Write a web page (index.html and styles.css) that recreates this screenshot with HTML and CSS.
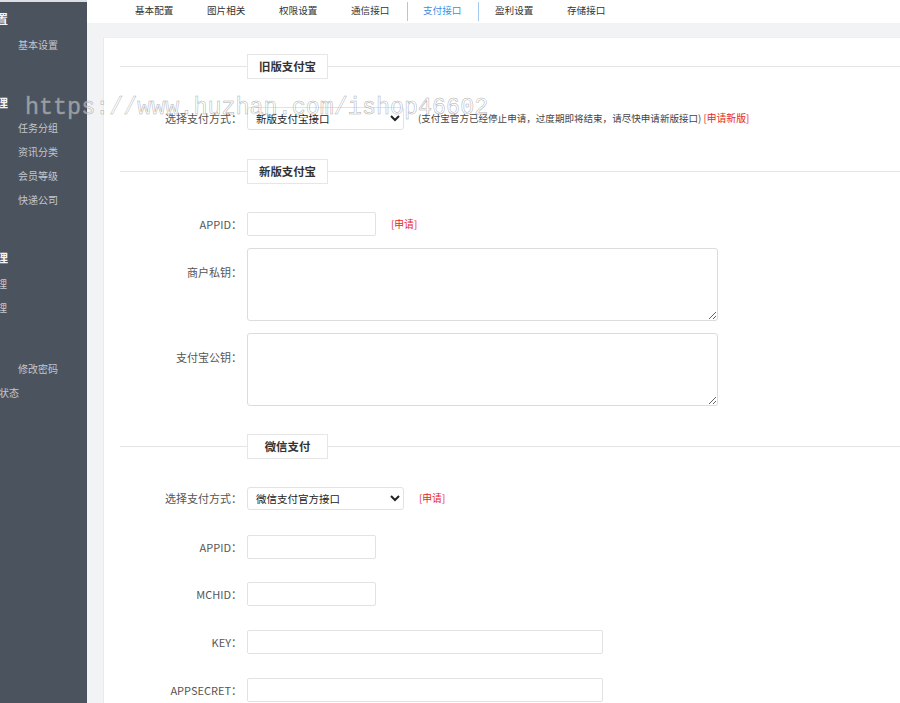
FILE: index.html
```html
<!DOCTYPE html>
<html lang="zh-CN">
<head>
<meta charset="utf-8">
<title>支付接口</title>
<link rel="stylesheet" href="styles.css">
</head>
<body>
<div class="page">
  <aside class="sidebar">
    <div class="nav">
      <div class="group g1">
        <div class="nav-head">系统设置</div>
        <div class="nav-item">基本设置</div>
      </div>
      <div class="group g2">
        <div class="nav-head">分类管理</div>
        <div class="nav-item">任务分组</div>
        <div class="nav-item">资讯分类</div>
        <div class="nav-item">会员等级</div>
        <div class="nav-item">快递公司</div>
      </div>
      <div class="group g3">
        <div class="nav-head">会员管理</div>
        <div class="nav-item cut">会员列表管理</div>
        <div class="nav-item cut">实名认证管理</div>
      </div>
      <div class="group g4">
        <div class="nav-item">修改密码</div>
        <div class="nav-item cut2">查看系统状态</div>
      </div>
    </div>
  </aside>

  <main class="main">
    <nav class="tabs">
      <a class="tab">基本配置</a>
      <a class="tab">图片相关</a>
      <a class="tab">权限设置</a>
      <a class="tab">通信接口</a>
      <a class="tab active">支付接口</a>
      <a class="tab">盈利设置</a>
      <a class="tab">存储接口</a>
    </nav>

    <div class="card">
      <div class="sec-head"><span class="sec-title">旧版支付宝</span></div>
      <div class="row row-sel">
        <label class="lbl lbl-sel">选择支付方式：</label>
        <select class="sel"><option>新版支付宝接口</option><option>旧版支付宝接口</option></select>
        <span class="note">(支付宝官方已经停止申请，过度期即将结束，请尽快申请新版接口) <a class="apply">[申请新版]</a></span>
      </div>

      <div class="sec-head"><span class="sec-title">新版支付宝</span></div>
      <div class="row gap-s">
        <label class="lbl">APPID：</label>
        <input class="inp inp-s" type="text">
        <a class="apply apply-inp">[申请]</a>
      </div>
      <div class="row gap-s">
        <label class="lbl lbl-area">商户私钥：</label>
        <textarea class="area"></textarea>
      </div>
      <div class="row gap-sec">
        <label class="lbl lbl-area">支付宝公钥：</label>
        <textarea class="area"></textarea>
      </div>

      <div class="sec-head"><span class="sec-title">微信支付</span></div>
      <div class="row gap-m">
        <label class="lbl lbl-sel">选择支付方式：</label>
        <select class="sel sel2"><option>微信支付官方接口</option></select>
        <a class="apply apply-sel">[申请]</a>
      </div>
      <div class="row gap-m2">
        <label class="lbl">APPID：</label>
        <input class="inp inp-s" type="text">
      </div>
      <div class="row gap-l">
        <label class="lbl">MCHID：</label>
        <input class="inp inp-s" type="text">
      </div>
      <div class="row gap-l">
        <label class="lbl">KEY：</label>
        <input class="inp inp-l" type="text">
      </div>
      <div class="row gap-l">
        <label class="lbl">APPSECRET：</label>
        <input class="inp inp-l" type="text">
      </div>
    </div>
  </main>

  <div class="watermark">https://www.huzhan.com/ishop46602</div>
</div>
</body>
</html>
```

FILE: styles.css
```css
* { box-sizing: border-box; }

html, body {
  margin: 0;
  padding: 0;
}

body {
  width: 900px;
  height: 703px;
  overflow: hidden;
  font-family: "Noto Sans CJK SC", "Open Sans", sans-serif;
  color: #333;
  background: #f2f3f5;
}

.page {
  position: relative;
  display: flex;
  width: 900px;
  height: 703px;
  overflow: hidden;
}

/* ---------- sidebar ---------- */
.sidebar {
  flex: none;
  width: 87px;
  height: 703px;
  background: #4b535f;
  border-top: 2px solid #dcdfe4;
  overflow: hidden;
}

.nav {
  margin-left: -60px;
  width: 160px;
  white-space: nowrap;
}

.nav-head {
  height: 26px;
  line-height: 26px;
  padding-left: 20px;
  font-size: 12px;
  font-weight: bold;
  color: #f4f5f7;
}

.nav-item {
  height: 24px;
  line-height: 24px;
  padding-left: 78px;
  font-size: 10px;
  color: #c3c7ce;
}

.nav-item.cut { padding-left: 7px; }
.nav-item.cut2 { padding-left: 19px; }

.g1 { padding-top: 4px; }
.g1 .nav-head { margin-bottom: 1px; }
.g2 { margin-top: 33px; }
.g3 { margin-top: 33px; }
.g3 .nav-head { margin-bottom: 1px; }
.g4 { margin-top: 37px; }

/* ---------- main ---------- */
.main {
  flex: 1;
  min-width: 0;
  background: #f2f3f5;
}

.tabs {
  display: flex;
  height: 23px;
  padding: 2px 0 0 32px;
  background: #fff;
}

.tab {
  width: 72px;
  height: 19px;
  line-height: 16px;
  padding: 0 15px;
  font-size: 9.6px;
  color: #333;
  border-left: 1px solid transparent;
  border-right: 1px solid transparent;
  white-space: nowrap;
}

.tab.active {
  color: #3d8ee6;
  border-left-color: #a6c9ee;
  border-right-color: #a6c9ee;
}

.card {
  margin: 14px 0 0 16px;
  height: 700px;
  padding: 16px 0 0 16px;
  background: #fff;
  border-left: 1px solid #e9eaec;
  border-top: 1px solid #eeeff1;
}

/* section header with rule */
.sec-head {
  height: 25px;
  margin-bottom: 28px;
  background: linear-gradient(#e4e4e4, #e4e4e4) no-repeat 0 12px / 100% 1px;
}

.sec-title {
  display: block;
  width: 81px;
  height: 25px;
  margin-left: 127px;
  line-height: 23px;
  text-align: center;
  font-size: 11.4px;
  font-weight: bold;
  color: #333;
  background: #fff;
  border: 1px solid #e6e6e6;
}

/* form rows */
.row {
  display: flex;
  align-items: flex-start;
}

.row-sel { margin: 1px 0 29px; }

.gap-s { margin-bottom: 12px; }
.gap-sec { margin-bottom: 28px; }
.gap-m { margin-bottom: 25px; }
.gap-m2 { margin-bottom: 23px; }
.gap-l { margin-bottom: 24px; }

.lbl {
  flex: none;
  width: 127px;
  padding-right: 5px;
  line-height: 24px;
  text-align: right;
  font-size: 11px;
  color: #555;
  white-space: nowrap;
}

.lbl-sel { line-height: 23px; }
.lbl-area { padding-top: 12px; }

.inp {
  height: 24px;
  border: 1px solid #e2e2e2;
  border-radius: 2px;
  background: #fff;
  outline: none;
}

.inp-s { width: 129px; }
.inp-l { width: 356px; }

.area {
  width: 471px;
  height: 73px;
  border: 1px solid #dcdcdc;
  border-radius: 3px;
  background: #fff;
  outline: none;
  resize: both;
}

.sel {
  width: 157px;
  height: 23px;
  padding: 0 4px;
  font-family: "Noto Sans CJK SC", sans-serif;
  font-size: 10.5px;
  color: #222;
  border: 1px solid #e2e2e2;
  border-radius: 3px;
  background: #fff;
}

.note {
  margin-left: 14px;
  line-height: 23px;
  font-size: 9.55px;
  color: #444;
  white-space: nowrap;
}

.apply {
  color: #e8261c;
  font-size: 9.8px;
  white-space: nowrap;
}

.apply-inp {
  margin-left: 15px;
  line-height: 24px;
}

.apply-sel {
  margin-left: 15px;
  line-height: 23px;
}

/* watermark lying over the page */
.watermark {
  position: absolute;
  left: 25px;
  top: 97px;
  font-family: "Liberation Mono", monospace;
  font-size: 23.4px;
  line-height: 23.4px;
  color: rgba(255, 255, 255, 0.45);
  -webkit-text-stroke: 0.5px rgba(150, 150, 150, 0.8);
  white-space: nowrap;
  pointer-events: none;
}
```
